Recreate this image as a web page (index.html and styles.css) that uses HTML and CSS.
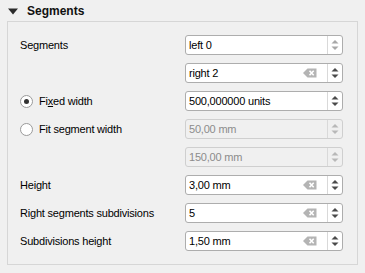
FILE: index.html
```html
<!DOCTYPE html>
<html>
<head>
<meta charset="utf-8">
<link rel="stylesheet" href="styles.css">
</head>
<body>
<div class="header">
  <svg class="tri" width="10" height="7" viewBox="0 0 10 7"><path d="M0 0.5 H10 L5 6.5 Z" fill="#2b2b2b"/></svg>
  <span class="title">Segments</span>
</div>
<div class="frame">
  <div class="label">Segments</div>
  <div class="spin">
    <span class="val">left 0</span>
    <span class="arrows faded"><svg width="14" height="18" viewBox="0 0 14 18"><path d="M3.5 7.5 L7 4 L10.5 7.5 Z"/><path d="M3.5 10.5 L7 14 L10.5 10.5 Z"/></svg></span>
  </div>

  <div class="label"></div>
  <div class="spin">
    <span class="val">right 2</span>
    <svg class="clear" width="14" height="10" viewBox="0 0 14 10"><path d="M0 5 L4.5 0.5 H13.5 V9.5 H4.5 Z" fill="#b4b4b4"/><path d="M6.5 2.8 L10.7 7.2 M10.7 2.8 L6.5 7.2" stroke="#fff" stroke-width="1.6"/></svg>
    <span class="arrows"><svg width="14" height="18" viewBox="0 0 14 18"><path d="M3.5 7.5 L7 4 L10.5 7.5 Z"/><path d="M3.5 10.5 L7 14 L10.5 10.5 Z"/></svg></span>
  </div>

  <div class="label radio-row"><span class="radio checked"></span>Fi<u>x</u>ed width</div>
  <div class="spin">
    <span class="val">500,000000 units</span>
    <span class="arrows"><svg width="14" height="18" viewBox="0 0 14 18"><path d="M3.5 7.5 L7 4 L10.5 7.5 Z"/><path d="M3.5 10.5 L7 14 L10.5 10.5 Z"/></svg></span>
  </div>

  <div class="label radio-row"><span class="radio"></span>Fit segment width</div>
  <div class="spin disabled">
    <span class="val">50,00 mm</span>
    <span class="arrows"><svg width="14" height="18" viewBox="0 0 14 18"><path d="M3.5 7.5 L7 4 L10.5 7.5 Z"/><path d="M3.5 10.5 L7 14 L10.5 10.5 Z"/></svg></span>
  </div>

  <div class="label"></div>
  <div class="spin disabled">
    <span class="val">150,00 mm</span>
    <span class="arrows"><svg width="14" height="18" viewBox="0 0 14 18"><path d="M3.5 7.5 L7 4 L10.5 7.5 Z"/><path d="M3.5 10.5 L7 14 L10.5 10.5 Z"/></svg></span>
  </div>

  <div class="label">Height</div>
  <div class="spin">
    <span class="val">3,00 mm</span>
    <svg class="clear" width="14" height="10" viewBox="0 0 14 10"><path d="M0 5 L4.5 0.5 H13.5 V9.5 H4.5 Z" fill="#b4b4b4"/><path d="M6.5 2.8 L10.7 7.2 M10.7 2.8 L6.5 7.2" stroke="#fff" stroke-width="1.6"/></svg>
    <span class="arrows"><svg width="14" height="18" viewBox="0 0 14 18"><path d="M3.5 7.5 L7 4 L10.5 7.5 Z"/><path d="M3.5 10.5 L7 14 L10.5 10.5 Z"/></svg></span>
  </div>

  <div class="label">Right segments subdivisions</div>
  <div class="spin">
    <span class="val">5</span>
    <svg class="clear" width="14" height="10" viewBox="0 0 14 10"><path d="M0 5 L4.5 0.5 H13.5 V9.5 H4.5 Z" fill="#b4b4b4"/><path d="M6.5 2.8 L10.7 7.2 M10.7 2.8 L6.5 7.2" stroke="#fff" stroke-width="1.6"/></svg>
    <span class="arrows"><svg width="14" height="18" viewBox="0 0 14 18"><path d="M3.5 7.5 L7 4 L10.5 7.5 Z"/><path d="M3.5 10.5 L7 14 L10.5 10.5 Z"/></svg></span>
  </div>

  <div class="label">Subdivisions height</div>
  <div class="spin">
    <span class="val">1,50 mm</span>
    <svg class="clear" width="14" height="10" viewBox="0 0 14 10"><path d="M0 5 L4.5 0.5 H13.5 V9.5 H4.5 Z" fill="#b4b4b4"/><path d="M6.5 2.8 L10.7 7.2 M10.7 2.8 L6.5 7.2" stroke="#fff" stroke-width="1.6"/></svg>
    <span class="arrows"><svg width="14" height="18" viewBox="0 0 14 18"><path d="M3.5 7.5 L7 4 L10.5 7.5 Z"/><path d="M3.5 10.5 L7 14 L10.5 10.5 Z"/></svg></span>
  </div>
</div>
</body>
</html>
```
FILE: styles.css
```css
html, body {
  margin: 0;
  padding: 0;
}
body {
  width: 365px;
  height: 273px;
  background: #f0f0f0;
  font-family: "Liberation Sans", Arial, sans-serif;
  font-size: 11px;
  letter-spacing: -0.2px;
  color: #000;
  overflow: hidden;
}
.header {
  height: 21px;
  display: flex;
  align-items: center;
  padding-left: 8px;
  box-sizing: border-box;
}
.tri {
  display: block;
  margin-right: 9px;
  margin-top: 1px;
}
.title {
  font-weight: bold;
  font-size: 12px;
  letter-spacing: 0;
  color: #111;
}
.frame {
  margin-left: 7px;
  width: 351px;
  height: 244px;
  box-sizing: border-box;
  border: 1px solid #d6d6d6;
  padding: 13px 0 0 12px;
  display: grid;
  grid-template-columns: 165px 158px;
  grid-auto-rows: 20px;
  row-gap: 8px;
  align-content: start;
}
.label {
  display: flex;
  align-items: center;
  white-space: nowrap;
}
.radio {
  width: 11px;
  height: 11px;
  border: 1px solid #9a9a9a;
  border-radius: 50%;
  background: #fff;
  margin-right: 6px;
  display: flex;
  align-items: center;
  justify-content: center;
}
.radio.checked::after {
  content: "";
  width: 5px;
  height: 5px;
  border-radius: 50%;
  background: #333;
}
.spin {
  display: flex;
  align-items: center;
  height: 20px;
  box-sizing: border-box;
  border: 1px solid #adadad;
  border-radius: 3px;
  background: #fff;
}
.val {
  flex: 1;
  padding-left: 3px;
  white-space: nowrap;
}
.clear {
  display: block;
  margin-right: 10px;
}
.arrows {
  width: 14px;
  height: 18px;
  border-left: 1px solid #d9d9d9;
  display: flex;
  align-items: center;
}
.arrows svg {
  display: block;
  fill: #4a4a4a;
}
.arrows.faded svg {
  fill: #a8a8a8;
}
.spin.disabled {
  background: #f0f0f0;
  border-color: #cfcfcf;
  color: #8c8c8c;
}
.spin.disabled .arrows svg {
  fill: #b8b8b8;
}
```
